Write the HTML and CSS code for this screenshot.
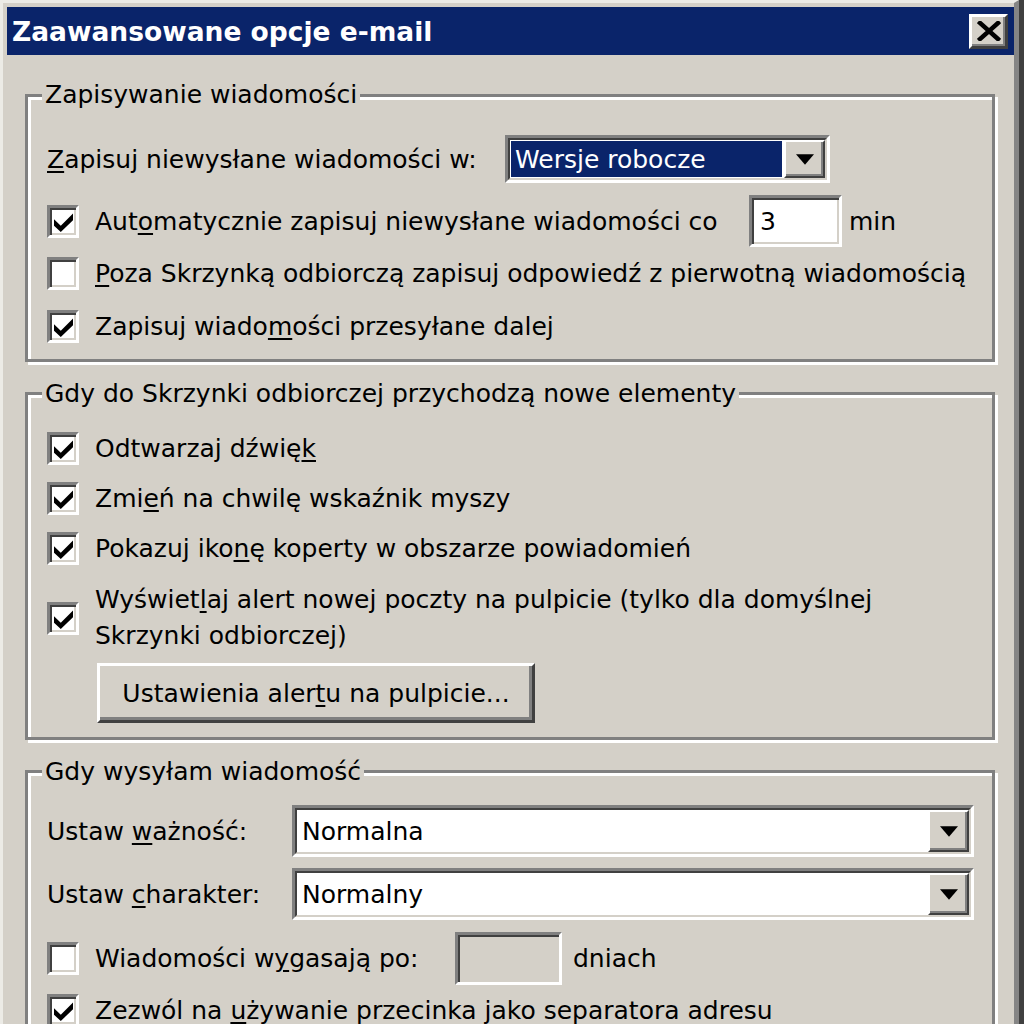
FILE: index.html
```
<!DOCTYPE html>
<html lang="pl">
<head>
    <meta charset="UTF-8">
    <title>Zaawansowane opcje e-mail</title>
    <link rel="stylesheet" href="styles.css">
</head>
<body>
    <div class="window">
        <div class="titlebar">
            <span class="title">Zaawansowane opcje e-mail</span>
            <span class="close-btn">
                <svg width="24" height="20" viewBox="0 0 24 20">
                    <path d="M3 2 L21 18 M21 2 L3 18" stroke="#000" stroke-width="4.5" stroke-linecap="square"/>
                </svg>
            </span>
        </div>

        <div class="content">
            <!-- Zapisywanie -->
            <div class="group group-save">
                <div class="legend">Zapisywanie wiadomości</div>
                <div class="row row-folder">
                    <span class="label label-folder"><u>Z</u>apisuj niewysłane wiadomości w:</span>
                    <span class="combo combo-folder">
                        <span class="combo-inner">
                            <span class="combo-value selected">Wersje robocze</span>
                            <span class="combo-arrow"><svg width="18" height="11" viewBox="0 0 7 4"><path d="M0 0 H7 L3.5 4 Z" fill="#000"/></svg></span>
                        </span>
                    </span>
                </div>
                <div class="row row-autosave">
                    <span class="check on"><svg width="19" height="19" viewBox="0 0 7 7"><path d="M0 2.3 L2.5 4.7 L7 0.2 V2.7 L2.5 7 L0 4.7 Z" fill="#000"/></svg></span>
                    <span class="check-label label-autosave">Aut<u>o</u>matycznie zapisuj niewysłane wiadomości co</span>
                    <span class="field field-minutes">3</span>
                    <span class="unit">min</span>
                </div>
                <div class="row">
                    <span class="check"></span>
                    <span class="check-label"><u>P</u>oza Skrzynką odbiorczą zapisuj odpowiedź z pierwotną wiadomością</span>
                </div>
                <div class="row">
                    <span class="check on"><svg width="19" height="19" viewBox="0 0 7 7"><path d="M0 2.3 L2.5 4.7 L7 0.2 V2.7 L2.5 7 L0 4.7 Z" fill="#000"/></svg></span>
                    <span class="check-label">Zapisuj wiado<u>m</u>ości przesyłane dalej</span>
                </div>
            </div>

            <!-- Nowe elementy -->
            <div class="group group-new">
                <div class="legend">Gdy do Skrzynki odbiorczej przychodzą nowe elementy</div>
                <div class="row row-short first">
                    <span class="check on"><svg width="19" height="19" viewBox="0 0 7 7"><path d="M0 2.3 L2.5 4.7 L7 0.2 V2.7 L2.5 7 L0 4.7 Z" fill="#000"/></svg></span>
                    <span class="check-label">Odtwarzaj dźwię<u>k</u></span>
                </div>
                <div class="row row-short">
                    <span class="check on"><svg width="19" height="19" viewBox="0 0 7 7"><path d="M0 2.3 L2.5 4.7 L7 0.2 V2.7 L2.5 7 L0 4.7 Z" fill="#000"/></svg></span>
                    <span class="check-label">Zmi<u>e</u>ń na chwilę wskaźnik myszy</span>
                </div>
                <div class="row row-short">
                    <span class="check on"><svg width="19" height="19" viewBox="0 0 7 7"><path d="M0 2.3 L2.5 4.7 L7 0.2 V2.7 L2.5 7 L0 4.7 Z" fill="#000"/></svg></span>
                    <span class="check-label">Pokazuj iko<u>n</u>ę koperty w obszarze powiadomień</span>
                </div>
                <div class="row row-multi">
                    <span class="check on"><svg width="19" height="19" viewBox="0 0 7 7"><path d="M0 2.3 L2.5 4.7 L7 0.2 V2.7 L2.5 7 L0 4.7 Z" fill="#000"/></svg></span>
                    <span class="check-label">Wyświet<u>l</u>aj alert nowej poczty na pulpicie (tylko dla domyślnej<br>Skrzynki odbiorczej)</span>
                </div>
                <span class="button">Ustawienia aler<u>t</u>u na pulpicie...</span>
            </div>

            <!-- Wysyłanie -->
            <div class="group group-send">
                <div class="legend">Gdy wysyłam wiadomość</div>
                <div class="row row-select first">
                    <span class="label label-select">Ustaw <u>w</u>ażność:</span>
                    <span class="combo combo-wide">
                        <span class="combo-inner">
                            <span class="combo-value">Normalna</span>
                            <span class="combo-arrow"><svg width="18" height="11" viewBox="0 0 7 4"><path d="M0 0 H7 L3.5 4 Z" fill="#000"/></svg></span>
                        </span>
                    </span>
                </div>
                <div class="row row-select">
                    <span class="label label-select">Ustaw <u>c</u>harakter:</span>
                    <span class="combo combo-wide">
                        <span class="combo-inner">
                            <span class="combo-value">Normalny</span>
                            <span class="combo-arrow"><svg width="18" height="11" viewBox="0 0 7 4"><path d="M0 0 H7 L3.5 4 Z" fill="#000"/></svg></span>
                        </span>
                    </span>
                </div>
                <div class="row row-expire">
                    <span class="check"></span>
                    <span class="check-label label-expire">Wiadomości w<u>y</u>gasają po:</span>
                    <span class="field field-days disabled"></span>
                    <span class="unit unit-days">dniach</span>
                </div>
                <div class="row row-short">
                    <span class="check on"><svg width="19" height="19" viewBox="0 0 7 7"><path d="M0 2.3 L2.5 4.7 L7 0.2 V2.7 L2.5 7 L0 4.7 Z" fill="#000"/></svg></span>
                    <span class="check-label">Zezwól na <u>u</u>żywanie przecinka jako separatora adresu</span>
                </div>
            </div>
        </div>
    </div>
</body>
</html>
```

FILE: styles.css
```
* {
    margin: 0;
    padding: 0;
    box-sizing: border-box;
}

body {
    background: #404040;
    height: 1024px;
    overflow: hidden;
    font-family: "DejaVu Sans", Verdana, sans-serif;
    font-size: 25px;
    color: #000;
}

u {
    text-decoration-thickness: 2px;
    text-underline-offset: 3px;
}

.window {
    height: 1024px;
    margin-right: 5px;
    background: #d4d0c8;
    border-top: 3px solid #ecebe6;
    border-left: 3px solid #ecebe6;
    border-right: 5px solid #858585;
    padding: 4px 0 0 4px;
}

/* title bar */
.titlebar {
    height: 48px;
    background: #0a246a;
    display: flex;
    align-items: center;
    justify-content: space-between;
    padding: 0 6px 0 5px;
}

.title {
    color: #fff;
    font-weight: bold;
    font-size: 26.5px;
}

.close-btn {
    width: 39px;
    height: 35px;
    display: flex;
    align-items: center;
    justify-content: center;
    background: #d4d0c8;
    border: 3px solid;
    border-color: #fff #404040 #404040 #fff;
    box-shadow: inset -2px -2px 0 #808080;
}

/* content and group boxes */
.content {
    padding: 0 19px 0 18px;
}

.group {
    border: 3px solid #808080;
    box-shadow: inset 3px 3px 0 #fff, 3px 3px 0 #fff;
    padding: 0 18px 0 19px;
    margin-top: 30px;
}

.group-save {
    margin-top: 39px;
    padding-bottom: 6px;
}

.group-new {
    padding-bottom: 14px;
}

.legend {
    width: fit-content;
    margin: -16px 0 0 -5px;
    padding: 0 3px;
    line-height: 30px;
    background: #d4d0c8;
    position: relative;
}

.group-save .legend {
    margin-top: -17px;
}

.row {
    display: flex;
    align-items: center;
    height: 53px;
    white-space: nowrap;
}

.row-folder {
    height: 48px;
    margin-top: 25px;
}

.row-autosave {
    height: 52px;
    margin-top: 12px;
}

.row-short {
    height: 50px;
}

.group-new .first {
    margin-top: 14px;
}

.row-multi {
    height: 72px;
    margin-top: 9px;
    line-height: 36px;
}

.row-select {
    height: 52px;
    margin-top: 11px;
}

.group-send .first {
    margin-top: 18px;
}

.row-expire {
    margin-top: 12px;
}

.label-folder {
    width: 458px;
    flex: none;
}

.label-select {
    width: 245px;
    flex: none;
}

/* checkboxes */
.check {
    width: 32px;
    height: 33px;
    flex: none;
    display: flex;
    align-items: center;
    justify-content: center;
    background: #fff;
    border: 3px solid;
    border-color: #808080 #fff #fff #808080;
    box-shadow: inset 2px 2px 0 #404040, inset -2px -2px 0 #d4d0c8;
}

.check svg {
    margin-top: 2px;
}

.check-label {
    margin-left: 16px;
}

.label-autosave {
    width: 654px;
    flex: none;
}

.label-expire {
    width: 360px;
    flex: none;
}

/* text fields */
.field {
    height: 52px;
    flex: none;
    background: #fff;
    border: 3px solid;
    border-color: #808080 #fff #fff #808080;
    box-shadow: inset 2px 2px 0 #404040, inset -2px -2px 0 #d4d0c8;
    padding: 9px 0 0 8px;
}

.field-minutes {
    width: 93px;
}

.field-days {
    width: 107px;
    height: 53px;
}

.field.disabled {
    background: #d4d0c8;
}

.unit {
    margin-left: 7px;
}

.unit-days {
    margin-left: 11px;
}

/* combo boxes */
.combo {
    height: 48px;
    border: 3px solid;
    border-color: #808080 #fff #fff #808080;
    display: flex;
}

.combo-folder {
    width: 325px;
}

.combo-wide {
    flex: 1;
    height: 52px;
}

.combo-inner {
    flex: 1;
    display: flex;
    border: 2px solid;
    border-color: #404040 #d4d0c8 #d4d0c8 #404040;
    background: #fff;
}

.combo-value {
    flex: 1;
    display: flex;
    align-items: center;
    padding-left: 5px;
}

.combo-value.selected {
    margin: 1px 2px 1px 1px;
    background: #0a246a;
    color: #fff;
    padding-left: 4px;
}

.combo-arrow {
    width: 41px;
    flex: none;
    display: flex;
    align-items: center;
    justify-content: center;
    background: #d4d0c8;
    border: 2px solid;
    border-color: #fff #404040 #404040 #fff;
    box-shadow: inset -2px -2px 0 #808080;
}

/* push button */
.button {
    display: flex;
    align-items: center;
    justify-content: center;
    width: 438px;
    height: 60px;
    margin: 9px 0 0 50px;
    border: 3px solid;
    border-color: #fff #404040 #404040 #fff;
    box-shadow: inset -3px -3px 0 #808080;
}
```
